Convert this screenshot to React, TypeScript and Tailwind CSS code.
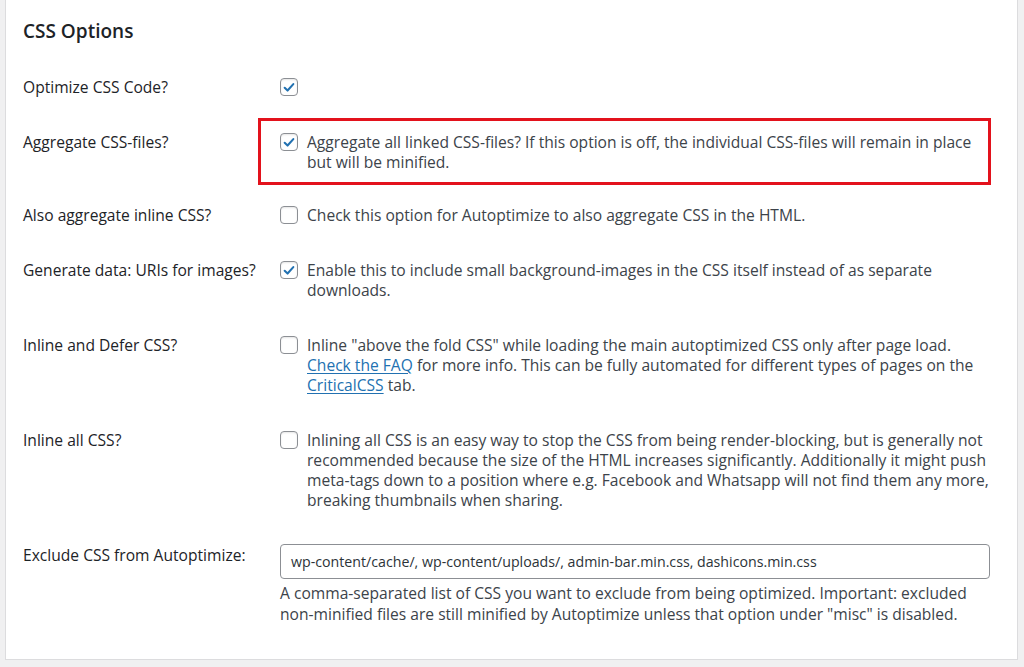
import React from "react";

type Row = {
  label: string;
  checked: boolean;
  body: React.ReactNode;
  highlight?: boolean;
};

function Checkbox({ checked }: { checked: boolean }) {
  return (
    <span className="mt-[1px] flex h-[18px] w-[18px] shrink-0 items-center justify-center rounded-[4px] border border-[#8c8f94] bg-white shadow-[inset_0_1px_2px_rgba(0,0,0,0.1)]">
      {checked && (
        <svg viewBox="0 0 20 20" className="h-[17px] w-[17px]">
          <path
            d="M4.6 10.4 L8.2 13.8 L15.4 5.8"
            fill="none"
            stroke="#2271b1"
            strokeWidth="2.6"
            strokeLinecap="round"
            strokeLinejoin="round"
          />
        </svg>
      )}
    </span>
  );
}

const link = "text-[#2271b1] underline underline-offset-[2px]";

const rows: Row[] = [
  { label: "Optimize CSS Code?", checked: true, body: null },
  {
    label: "Aggregate CSS-files?",
    checked: true,
    highlight: true,
    body: "Aggregate all linked CSS-files? If this option is off, the individual CSS-files will remain in place but will be minified.",
  },
  {
    label: "Also aggregate inline CSS?",
    checked: false,
    body: "Check this option for Autoptimize to also aggregate CSS in the HTML.",
  },
  {
    label: "Generate data: URIs for images?",
    checked: true,
    body: "Enable this to include small background-images in the CSS itself instead of as separate downloads.",
  },
  {
    label: "Inline and Defer CSS?",
    checked: false,
    body: (
      <>
        Inline "above the fold CSS" while loading the main autoptimized CSS only after page load.{" "}
        <a className={link}>Check the FAQ</a> for more info. This can be fully automated for different types of pages on the{" "}
        <a className={link}>CriticalCSS</a> tab.
      </>
    ),
  },
  {
    label: "Inline all CSS?",
    checked: false,
    body: "Inlining all CSS is an easy way to stop the CSS from being render-blocking, but is generally not recommended because the size of the HTML increases significantly. Additionally it might push meta-tags down to a position where e.g. Facebook and Whatsapp will not find them any more, breaking thumbnails when sharing.",
  },
];

export default function App() {
  return (
    <div
      className="h-[667px] w-[1024px] overflow-hidden bg-[#f0f0f1] text-[15.6px] leading-[20px] text-[#3c434a]"
      style={{ fontFamily: '"Open Sans", "Noto Sans", sans-serif' }}
    >
      <div className="ml-[5px] h-[660px] w-[1013px] border border-t-0 border-[#dcdcde] bg-white pl-[17px] pr-[27px] pt-[18px]">
        <h2 className="text-[19px] font-semibold leading-[26px] text-[#1d2327]">CSS Options</h2>

        <div className="mt-[16px]">
          {rows.map((r) => (
            <div key={r.label} className={`flex pt-[17px] ${r.highlight ? "pb-[16px]" : "pb-[18px]"}`}>
              <div className="w-[257px] shrink-0 text-[#1d2327]">{r.label}</div>
              <div className="relative flex flex-1 gap-[9px]">
                {r.highlight && (
                  <div className="pointer-events-none absolute -bottom-[13px] -left-[22px] -right-[1px] -top-[14px] border-[3px] border-[#e3121c]" />
                )}
                <Checkbox checked={r.checked} />
                {r.body && <span>{r.body}</span>}
              </div>
            </div>
          ))}

          <div className="flex pt-[16px]">
            <div className="mt-[1px] w-[257px] shrink-0 text-[#1d2327]">Exclude CSS from Autoptimize:</div>
            <div className="flex-1">
              <div className="flex h-[35px] items-center rounded-[4px] border border-[#8c8f94] bg-white px-[10px] text-[14.2px] text-[#2c3338]">
                wp-content/cache/, wp-content/uploads/, admin-bar.min.css, dashicons.min.css
              </div>
              <p className="mt-[4px] leading-[21px]">
                A comma-separated list of CSS you want to exclude from being optimized. Important: excluded non-minified files are still minified by Autoptimize unless that option under "misc" is disabled.
              </p>
            </div>
          </div>
        </div>
      </div>
    </div>
  );
}
